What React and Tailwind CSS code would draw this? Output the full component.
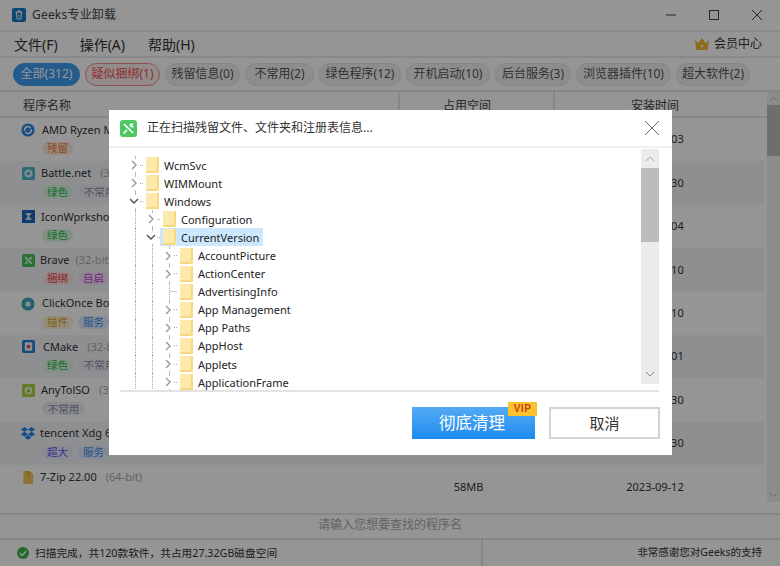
import React from "react";

const FONT = { fontFamily: '"Noto Sans", "Noto Sans CJK SC", sans-serif' };

const TABS = [
  { t: "全部(312)", c: "w-[67px] bg-[#3b9cf0] text-white border-[#3b9cf0]" },
  { t: "疑似捆绑(1)", c: "w-[75px] bg-[#fdeeee] text-[#ef5350] border-[#f28a8a]" },
  { t: "残留信息(0)", c: "w-[75px] bg-[#f2f2f2] text-[#555] border-[#e4e4e4]" },
  { t: "不常用(2)", c: "w-[69px] bg-[#f2f2f2] text-[#555] border-[#e4e4e4]" },
  { t: "绿色程序(12)", c: "w-[82px] bg-[#f2f2f2] text-[#555] border-[#e4e4e4]" },
  { t: "开机启动(10)", c: "w-[84px] bg-[#f2f2f2] text-[#555] border-[#e4e4e4]" },
  { t: "后台服务(3)", c: "w-[76px] bg-[#f2f2f2] text-[#555] border-[#e4e4e4]" },
  { t: "浏览器插件(10)", c: "w-[95px] bg-[#f2f2f2] text-[#555] border-[#e4e4e4]" },
  { t: "超大软件(2)", c: "w-[74px] bg-[#f2f2f2] text-[#555] border-[#e4e4e4]" },
];

const TAG = {
  残留: "w-[31px] bg-[#ffe9dc] text-[#f0762a]",
  绿色: "w-[31px] bg-[#dff7e4] text-[#25c04a]",
  不常用: "w-[43px] bg-[#eceef7] text-[#8c90a8]",
  捆绑: "w-[31px] bg-[#ffe3e3] text-[#e8403f]",
  自启: "w-[31px] bg-[#f8e3fb] text-[#c13bd8]",
  插件: "w-[31px] bg-[#fdf2d2] text-[#dba21a]",
  服务: "w-[31px] bg-[#deecff] text-[#3f8ee8]",
  超大: "w-[31px] bg-[#ebe9ff] text-[#5a58e6]",
};

const Ic = {
  amd: (
    <svg viewBox="0 0 14 14" className="w-[14px] h-[14px]">
      <circle cx="7" cy="7" r="6.6" fill="#2f86e8" />
      <path d="M3.800 7.800a3.200 3.200 0 0 1 5.800-2.600M10.200 6.200a3.200 3.200 0 0 1-5.800 2.600" stroke="#fff" strokeWidth="1.5" fill="none" />
    </svg>
  ),
  battle: (
    <svg viewBox="0 0 14 14" className="w-[13px] h-[13px]">
      <rect width="14" height="14" rx="2" fill="#4db6cc" />
      <circle cx="7" cy="7" r="4.4" fill="#d9f1f6" />
      <circle cx="7" cy="7" r="2" fill="#4db6cc" />
    </svg>
  ),
  icon: (
    <svg viewBox="0 0 14 14" className="w-[13px] h-[13px]">
      <rect width="14" height="14" fill="#1f66c4" />
      <path d="M4 3.400h6v1.600H8v4h2v1.600H4V9h2V5H4z" fill="#fff" />
    </svg>
  ),
  brave: (
    <svg viewBox="0 0 14 14" className="w-[13px] h-[13px]">
      <rect width="14" height="14" rx="2" fill="#4cc35a" />
      <path d="M3.500 3.500l7 7M10.500 3.500L8 6M6 8l-2.500 2.500" stroke="#fff" strokeWidth="1.6" />
    </svg>
  ),
  click: (
    <svg viewBox="0 0 14 14" className="w-[14px] h-[14px]">
      <circle cx="7" cy="7" r="6.6" fill="#3fa5b8" />
      <circle cx="7" cy="7" r="2.600" fill="#e2f4f7" />
    </svg>
  ),
  cmake: (
    <svg viewBox="0 0 14 14" className="w-[13px] h-[13px]">
      <rect width="14" height="14" rx="2" fill="#2b7fd8" />
      <rect x="3" y="2.500" width="8" height="9" rx="1" fill="#f2f6fb" />
      <circle cx="7" cy="7" r="2" fill="#e0455a" />
    </svg>
  ),
  any: (
    <svg viewBox="0 0 14 14" className="w-[13px] h-[13px]">
      <rect width="14" height="14" rx="2" fill="#a7d13f" />
      <circle cx="7" cy="7" r="4" fill="#f3f9dc" />
      <path d="M7 4.500v4M5 7l2 2 2-2" stroke="#7da51e" strokeWidth="1.100" fill="none" />
    </svg>
  ),
  drop: (
    <svg viewBox="0 0 14 13" className="w-[14px] h-[13px]">
      <path
        d="M3.500 0L7 2.400 3.500 4.800 0 2.400zM10.500 0L14 2.400l-3.500 2.400L7 2.400zM3.500 4.800L7 7.200 3.500 9.600 0 7.200zM10.500 4.800L14 7.200l-3.500 2.400L7 7.200zM3.600 10.400L7 8l3.400 2.400L7 12.800z"
        fill="#1f7fe8"
      />
    </svg>
  ),
  zip: (
    <svg viewBox="0 0 12 14" className="w-[12px] h-[13px]">
      <path d="M1 0h7l3.500 3.500V14H1z" fill="#f3c65a" />
      <path d="M5 0h1.500v1.500H5zM6.500 1.500H8V3H6.500zM5 3h1.500v1.500H5zM6.500 4.500H8V6H6.500z" fill="#d99f2c" />
    </svg>
  ),
};

const ROWS = [
  { i: Ic.amd, n: "AMD Ryzen Master", bit: "", tags: ["残留"], d: "2023-08-03", nx: "ml-[7px]", bx: "ml-[9px]", s: "" },
  { i: Ic.battle, n: "Battle.net", bit: "(32-bit)", tags: ["绿色", "不常用"], d: "2023-08-30", nx: "ml-[6px]", bx: "ml-[9px]", s: "" },
  { i: Ic.icon, n: "IconWprkshop", bit: "", tags: ["绿色"], d: "2023-08-04", nx: "ml-[6px]", bx: "ml-[9px]", s: "" },
  { i: Ic.brave, n: "Brave", bit: "(32-bit)", tags: ["捆绑", "自启"], d: "2023-08-10", nx: "ml-[5px]", bx: "ml-[6px]", s: "" },
  { i: Ic.click, n: "ClickOnce Bootstrapper", bit: "", tags: ["插件", "服务"], d: "2023-08-10", nx: "ml-[7px]", bx: "ml-[9px]", s: "" },
  { i: Ic.cmake, n: "CMake", bit: "(32-bit)", tags: ["绿色", "不常用"], d: "2023-08-01", nx: "ml-[8px]", bx: "ml-[9px]", s: "" },
  { i: Ic.any, n: "AnyTolSO", bit: "(32-bit)", tags: ["不常用"], d: "2023-08-30", nx: "ml-[6px]", bx: "ml-[9px]", s: "" },
  { i: Ic.drop, n: "tencent Xdg 64", bit: "", tags: ["超大", "服务"], d: "2023-08-30", nx: "ml-[5px]", bx: "ml-[9px]", s: "" },
  { i: Ic.zip, n: "7-Zip 22.00", bit: "(64-bit)", tags: [], d: "2023-09-12", nx: "ml-[5px]", bx: "ml-[9px]", s: "58MB" },
];

const TREE = [
  { n: "WcmSvc", g: [], k: "r" },
  { n: "WIMMount", g: [], k: "r" },
  { n: "Windows", g: [], k: "d" },
  { n: "Configuration", g: [1], k: "r" },
  { n: "CurrentVersion", g: [1], k: "d", sel: true },
  { n: "AccountPicture", g: [1, 1], k: "r" },
  { n: "ActionCenter", g: [1, 1], k: "r" },
  { n: "AdvertisingInfo", g: [1, 1], k: "l" },
  { n: "App Management", g: [1, 1], k: "r" },
  { n: "App Paths", g: [1, 1], k: "r" },
  { n: "AppHost", g: [1, 1], k: "r" },
  { n: "Applets", g: [1, 1], k: "r" },
  { n: "ApplicationFrame", g: [1, 1], k: "r" },
];

function Folder() {
  return (
    <svg viewBox="0 0 13 16" className="w-[13px] h-[16px] shrink-0">
      <rect x="0" y="0" width="13" height="16" fill="#f9d77e" />
      <rect x="0" y="0" width="11" height="14" fill="#fee9ac" />
      <rect x="10" y="12" width="3" height="4" fill="#fbdc8a" />
    </svg>
  );
}

function Toggle({ k }) {
  if (k === "l")
    return (
      <span className="w-[17px] h-full shrink-0 flex items-center">
        <span className="ml-[9px] h-full border-l border-dotted border-[#aaa]" />
        <span className="w-[8px] border-t border-[#ccc]" />
      </span>
    );
  return (
    <span className="relative w-[17px] h-full shrink-0 flex items-center">
      <span className="absolute left-[9px] top-0 h-[2px] border-l border-dotted border-[#bbb]" />
      <span className="absolute left-[9px] bottom-0 h-[2px] border-l border-dotted border-[#bbb]" />
      <svg viewBox="0 0 10 10" className="w-[10px] h-[10px] ml-[3px] shrink-0">
        {k === "r" ? (
          <path d="M3 1l4 4-4 4" fill="none" stroke="#a0a0a0" strokeWidth="1.500" />
        ) : (
          <path d="M1 3l4 4 4-4" fill="none" stroke="#555" strokeWidth="1.500" />
        )}
      </svg>
      <span className="ml-[1px] w-[3px] border-t border-dotted border-[#aaa]" />
    </span>
  );
}

function TreeRow({ r }) {
  return (
    <div className="h-[18.1px] flex items-center shrink-0">
      {r.g.map((_, i) => (
        <span key={i} className="w-[17px] h-full shrink-0">
          <span className="block ml-[9px] h-full border-l border-dotted border-[#aaa]" />
        </span>
      ))}
      <Toggle k={r.k} />
      <span className={`flex items-center h-[18px] ${r.sel ? "bg-[#cce8ff] pl-[3px] pr-[4px]" : "ml-[3px]"}`}>
        <Folder />
        <span className="ml-[5px] text-[11px] leading-none text-[#222] whitespace-nowrap">{r.n}</span>
      </span>
    </div>
  );
}

function Row({ r, idx }) {
  return (
    <div className={`h-[43.4px] mr-[16px] pl-[21px] flex ${idx % 2 ? "bg-[#f4f5f8]" : "bg-white"}`}>
      <div className="w-[379px] shrink-0 overflow-hidden pt-[4px]">
        <div className="flex items-center h-[16px]">
          <span className="w-[14px] flex justify-center shrink-0">{r.i}</span>
          <span className={`${r.nx} text-[11px] text-[#333] whitespace-nowrap`}>{r.n}</span>
          {r.bit && <span className={`${r.bx} text-[11px] text-[#aaa]`}>{r.bit}</span>}
        </div>
        {r.tags.length > 0 && (
          <div className="flex gap-[5px] ml-[21px] mt-[4px]">
            {r.tags.map((t) => (
              <span key={t} className={`h-[13px] rounded-full flex items-center justify-center text-[10.5px] leading-none ${TAG[t]}`}>
                {t}
              </span>
            ))}
          </div>
        )}
      </div>
      <div className="w-[137px] shrink-0 text-center text-[11px] text-[#333] self-center">{r.s}</div>
      <div className="w-[236px] shrink-0 text-center text-[11px] text-[#333] self-center">{r.d}</div>
    </div>
  );
}

export default function App() {
  return (
    <div className="relative w-[780px] h-[566px] overflow-hidden bg-white flex flex-col" style={FONT}>
      {/* title bar */}
      <div className="h-[32px] shrink-0 flex items-center border-b-2 border-[#eaeaea] pl-[12px]">
        <svg viewBox="0 0 14 14" className="w-[14px] h-[14px]">
          <rect width="14" height="14" rx="2" fill="#137ac0" />
          <path d="M3.500 4.200h7M5.800 4V2.800h2.400V4M4.500 4.500l.5 6.500h4l.5-6.500M7 6.500v2.500" fill="none" stroke="#fff" strokeWidth="1" />
        </svg>
        <span className="ml-[6px] text-[12px] text-[#444] tracking-[0.2px]">Geeks专业卸载</span>
        <div className="ml-auto flex items-center">
          <svg viewBox="0 0 10 10" className="w-[10px] h-[10px] mr-[33px]">
            <path d="M0 5h10" stroke="#444" strokeWidth="1" />
          </svg>
          <svg viewBox="0 0 10 10" className="w-[10px] h-[10px] mr-[33px]">
            <rect x="0.500" y="0.500" width="9" height="9" fill="none" stroke="#444" />
          </svg>
          <svg viewBox="0 0 10 10" className="w-[10px] h-[10px] mr-[18px]">
            <path d="M0 0l10 10M10 0L0 10" stroke="#444" strokeWidth="1" />
          </svg>
        </div>
      </div>
      {/* menu */}
      <div className="h-[26px] shrink-0 flex items-center border-b-2 border-[#eaeaea] pl-[14px] pr-[18px] text-[14px] text-[#333]">
        <span>文件(F)</span>
        <span className="ml-[22px]">操作(A)</span>
        <span className="ml-[23px]">帮助(H)</span>
        <span className="ml-auto flex items-center text-[12px]">
          <svg viewBox="0 0 14 12" className="w-[14px] h-[12px] mr-[5px]">
            <path d="M0 2.500l3.500 2.500L7 0l3.500 5L14 2.500 12.500 12h-11z" fill="#f5b52e" />
            <circle cx="7" cy="8" r="1.500" fill="#fff3cf" />
          </svg>
          会员中心
        </span>
      </div>
      {/* tabs */}
      <div className="h-[34px] shrink-0 flex items-center gap-[5px] pl-[13px] border-b-2 border-[#e8e8e8]">
        {TABS.map((t) => (
          <span key={t.t} className={`h-[23px] rounded-full border flex items-center justify-center text-[12px] whitespace-nowrap shrink-0 ${t.c}`}>
            {t.t}
          </span>
        ))}
      </div>
      {/* main */}
      <div className="flex-1 min-h-0 relative flex flex-col">
        <div className="h-[26px] mr-[13px] flex items-center text-[12px] text-[#444] border-b-2 border-[#e8e8e8] shrink-0">
          <span className="w-[400px] pl-[23px] pt-[3px] h-full flex items-center border-r-2 border-[#e8e8e8]">程序名称</span>
          <span className="w-[155px] pr-[19px] pt-[3px] h-full flex items-center justify-center border-r-2 border-[#e8e8e8]">占用空间</span>
          <span className="flex-1 pr-[12px] pt-[3px] text-center">安装时间</span>
        </div>
        <div className="flex-1 min-h-0">
          {ROWS.map((r, i) => (
            <Row key={r.n} r={r} idx={i} />
          ))}
        </div>
        {/* page scrollbar */}
        <div className="absolute right-0 top-0 bottom-[11px] w-[13px] bg-[#f0f0f0] flex flex-col items-center">
          <svg viewBox="0 0 10 6" className="w-[9px] h-[6px] mt-[4px]">
            <path d="M1 5l4-4 4 4" fill="none" stroke="#aaa" />
          </svg>
          <div className="absolute top-[13px] h-[51px] w-full bg-[#bdbdbd]" />
          <svg viewBox="0 0 10 6" className="w-[9px] h-[6px] mt-auto mb-[4px]">
            <path d="M1 1l4 4 4-4" fill="none" stroke="#aaa" />
          </svg>
        </div>
      </div>
      {/* search */}
      <div className="h-[19px] pb-[4px] shrink-0 border-y-2 border-[#e8e8e8] box-content flex items-center justify-center text-[12px] text-[#aaa]">
        请输入您想要查找的程序名
      </div>
      {/* status */}
      <div className="h-[26px] shrink-0 flex items-center pl-[17px] text-[10.7px] text-[#333]">
        <svg viewBox="0 0 12 12" className="w-[12px] h-[12px] mr-[6px]">
          <circle cx="6" cy="6" r="6" fill="#3bb54a" />
          <path d="M3 6.200l2.200 2.200L9 4.200" fill="none" stroke="#fff" strokeWidth="1.500" />
        </svg>
        <span>扫描完成，共120款软件，共占用27.32GB磁盘空间</span>
        <span className="ml-auto w-[299px] h-full border-l-2 border-[#e8e8e8] flex items-center justify-end pr-[18px] text-[10.5px]">
          非常感谢您对Geeks的支持
        </span>
      </div>

      {/* modal overlay */}
      <div className="absolute inset-0 bg-black/[0.415] flex items-start justify-start pl-[109px] pt-[110px]">
        <div className="w-[563px] h-[345px] bg-white flex flex-col">
          <div className="h-[38px] shrink-0 border-b-2 border-[#f0f0f0] flex items-center pl-[11px]">
            <svg viewBox="0 0 17 17" className="w-[17px] h-[17px]">
              <rect width="17" height="17" rx="3" fill="#4cc764" />
              <path d="M4 4l9 9M13 3.500l-2.500 2.500M10.500 3.500a2.300 2.300 0 0 0 3 3M7 10l-3.500 3.500" fill="none" stroke="#fff" strokeWidth="1.700" />
            </svg>
            <span className="ml-[10px] text-[12px] text-[#333]">正在扫描残留文件、文件夹和注册表信息...</span>
            <svg viewBox="0 0 14 14" className="w-[14px] h-[14px] ml-auto mr-[13px]">
              <path d="M0 0l14 14M14 0L0 14" stroke="#666" strokeWidth="1" />
            </svg>
          </div>
          <div className="h-[242px] shrink-0 flex pl-[17px] pr-[13px] pt-[8px]">
            <div className="flex-1 min-w-0 overflow-hidden flex flex-col">
              {TREE.map((r) => (
                <TreeRow key={r.n} r={r} />
              ))}
            </div>
            <div className="w-[18px] -mt-[7px] h-[235px] bg-[#ebebeb] relative flex flex-col items-center">
              <svg viewBox="0 0 10 6" className="w-[10px] h-[6px] mt-[7px]">
                <path d="M1 5l4-4 4 4" fill="none" stroke="#aaa" />
              </svg>
              <div className="absolute top-[19px] h-[74px] w-full bg-[#bcbcbc]" />
              <svg viewBox="0 0 10 6" className="w-[10px] h-[6px] mt-auto mb-[7px]">
                <path d="M1 1l4 4 4-4" fill="none" stroke="#888" />
              </svg>
            </div>
          </div>
          <div className="h-[2px] ml-[11px] mr-[13px] bg-[#e2e2e2] shrink-0" />
          <div className="flex justify-end gap-[14px] pr-[12px] pt-[15px]">
            <div className="relative w-[123px] h-[32px] bg-gradient-to-b from-[#52aaf3] to-[#1a8bf0] text-white text-[16.5px] flex items-center justify-center">
              <span className="mr-[3px]">彻底清理</span>
              <span
                className="absolute -top-[5px] -right-[2px] w-[29px] h-[14px] bg-[#fcc22c] text-[#c8401a] text-[10px] font-bold leading-none tracking-[0.5px] flex items-center justify-center"
                style={{ fontFamily: '"Liberation Sans", sans-serif' }}
              >
                VIP
              </span>
            </div>
            <div className="w-[111px] h-[32px] border-2 border-[#d4d4d4] text-[15px] text-[#333] flex items-center justify-center">
              取消
            </div>
          </div>
        </div>
      </div>
    </div>
  );
}
